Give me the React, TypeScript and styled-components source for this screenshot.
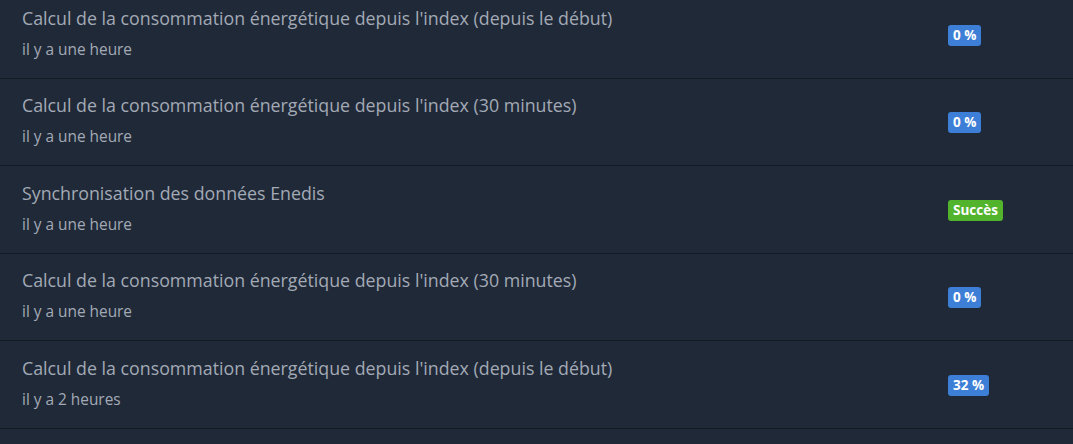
import React from "react";
import styled, { createGlobalStyle } from "styled-components";

const Global = createGlobalStyle`
  html, body { margin: 0; padding: 0; background: #202938; }
  body { font-family: "Open Sans", "Noto Sans", sans-serif; overflow: hidden; height: 444px; }
`;

const List = styled.div`
  display: flex;
  flex-direction: column;
  margin-top: -9px;
  background: #202938;
`;

const Row = styled.div`
  display: grid;
  grid-template-columns: 1fr 125px;
  align-items: center;
  height: 87.5px;
  flex-shrink: 0;
  padding-left: 22px;
  box-sizing: border-box;
  border-bottom: 1px solid #141a24;
`;

const Info = styled.div`
  display: flex;
  flex-direction: column;
  gap: 10px;
  margin-top: -3px;
`;

const Title = styled.div`
  font-size: 17.8px;
  line-height: 24px;
  color: #a3aab5;
  white-space: nowrap;
`;

const Sub = styled.div`
  font-size: 15.4px;
  line-height: 20px;
  color: #a3aab5;
  white-space: nowrap;
`;

const Badge = styled.span<{ $tone: "blue" | "green" }>`
  justify-self: start;
  display: inline-flex;
  align-items: center;
  justify-content: center;
  box-sizing: border-box;
  height: 21px;
  min-height: 21px;
  line-height: 21px;
  padding: 0 5px;
  margin-top: 2px;
  border-radius: 3px;
  font-size: 13.5px;
  font-weight: 700;
  color: #ffffff;
  background: ${(p) => (p.$tone === "green" ? "#52b32c" : "#3d7ed6")};
`;

const items: { title: string; sub: string; badge: string; tone: "blue" | "green" }[] = [
  { title: "Calcul de la consommation énergétique depuis l'index (depuis le début)", sub: "il y a une heure", badge: "0 %", tone: "blue" },
  { title: "Calcul de la consommation énergétique depuis l'index (30 minutes)", sub: "il y a une heure", badge: "0 %", tone: "blue" },
  { title: "Synchronisation des données Enedis", sub: "il y a une heure", badge: "Succès", tone: "green" },
  { title: "Calcul de la consommation énergétique depuis l'index (30 minutes)", sub: "il y a une heure", badge: "0 %", tone: "blue" },
  { title: "Calcul de la consommation énergétique depuis l'index (depuis le début)", sub: "il y a 2 heures", badge: "32 %", tone: "blue" },
];

export default function App() {
  return (
    <>
      <Global />
      <List>
        {items.map((it, i) => (
          <Row key={i}>
            <Info>
              <Title>{it.title}</Title>
              <Sub>{it.sub}</Sub>
            </Info>
            <Badge $tone={it.tone}>{it.badge}</Badge>
          </Row>
        ))}
      </List>
    </>
  );
}
